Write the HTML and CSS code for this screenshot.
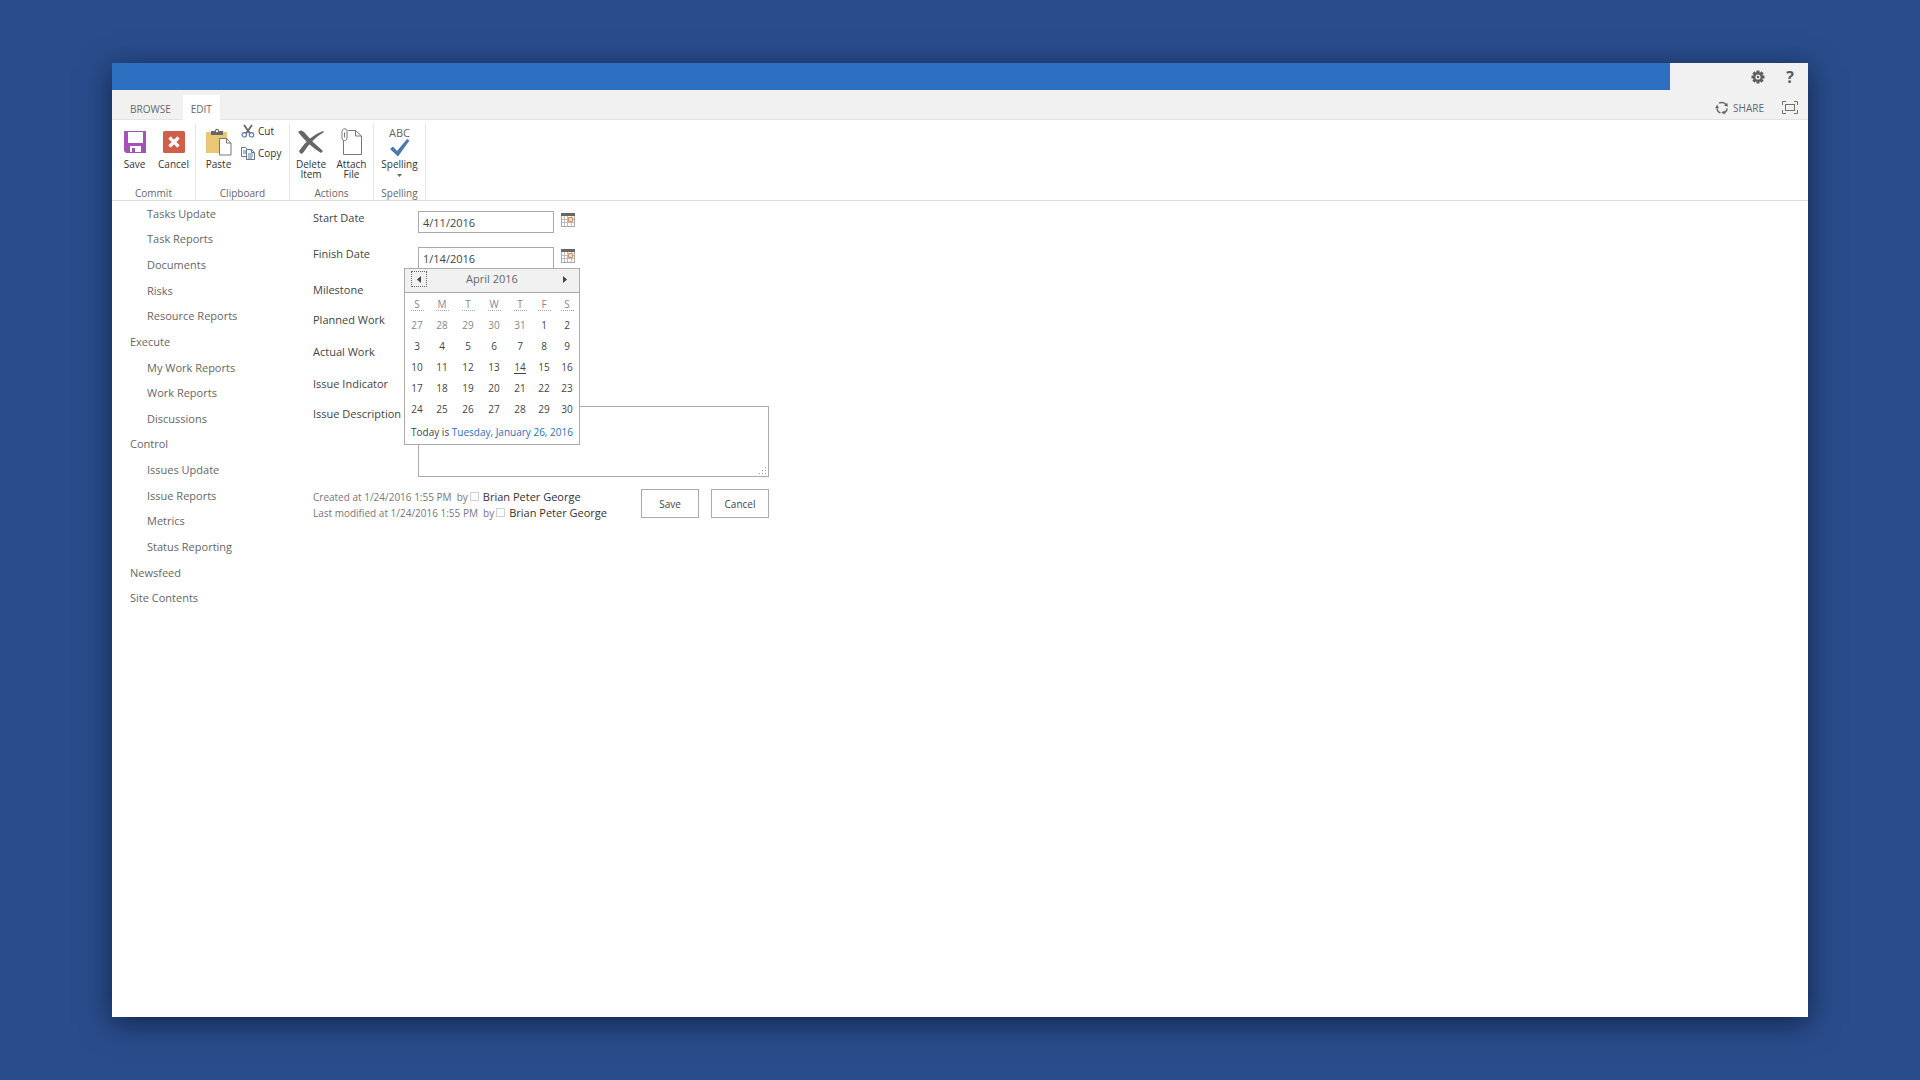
FILE: index.html
```html
<!DOCTYPE html>
<html lang="en">
<head>
<meta charset="utf-8">
<title>Edit Item</title>
<link rel="stylesheet" href="styles.css">
</head>
<body>
<div class="window">
  <header class="header">
    <div class="suite-bar">
      <div class="suite-brand"></div>
      <div class="suite-actions">
        <button class="icon-button" aria-label="Settings">
          <svg width="14" height="14" viewBox="0 0 14 14"><g fill="#5c5c5c"><rect x="5.5" y="0.5" width="3" height="13"/><rect x="5.5" y="0.5" width="3" height="13" transform="rotate(45 7 7)"/><rect x="5.5" y="0.5" width="3" height="13" transform="rotate(90 7 7)"/><rect x="5.5" y="0.5" width="3" height="13" transform="rotate(135 7 7)"/></g><circle cx="7" cy="7" r="3.7" fill="#f1f1f1" stroke="#5c5c5c" stroke-width="2.2"/><circle cx="7" cy="7" r="1.2" fill="#5c5c5c"/></svg>
        </button>
        <button class="icon-button help">?</button>
      </div>
    </div>
    <div class="tab-bar">
      <nav class="tabs">
        <a class="tab" href="#browse">BROWSE</a>
        <a class="tab tab-active" href="#edit">EDIT</a>
      </nav>
      <div class="page-actions">
        <button class="share">
          <svg width="14" height="14" viewBox="0 0 14 14" fill="none" stroke="#666" stroke-width="1.4"><path d="M4 2.2A5.2 5.2 0 0 1 11.3 4.2"/><path d="M12.2 7.4A5.2 5.2 0 0 1 8.4 12"/><path d="M5.4 12A5.2 5.2 0 0 1 2 7.5"/><path d="M0 7.2L2.2 3.4 4 7.2ZM9 4.8L13 5.5 12.2 1.8ZM9.6 9.4L6.2 11.6 9.6 13.6Z" fill="#666" stroke="none"/></svg>
          <span>SHARE</span>
        </button>
        <button class="icon-button" aria-label="Focus on content">
          <svg width="16" height="13" viewBox="0 0 16 13" fill="none" stroke="#707070"><rect x="3.5" y="3.5" width="9" height="6"/><path d="M.5 4V.5H4M12 .5h3.500V4M15.500 9v3.500H12M4 12.500H.5V9"/></svg>
        </button>
      </div>
    </div>
  </header>

  <div class="ribbon">
    <section class="group">
      <div class="group-tools group-inset">
        <button class="tool">
          <span class="tool-icon"><svg width="22" height="22" viewBox="0 0 22 22"><path d="M0 0h22v22H2l-2-2z" fill="#a352b8"/><path d="M4 1h15v11H4z" fill="#fff"/><path d="M6 15h11v6H6z" fill="#fff"/><path d="M8 17h3v4H8z" fill="#a352b8"/></svg></span>
          <span class="tool-label">Save</span>
        </button>
        <button class="tool">
          <span class="tool-icon"><svg width="22" height="22" viewBox="0 0 22 22"><rect width="22" height="22" rx="1.500" fill="#cf5f48"/><path d="M6.500 6.500l9 9M15.500 6.500l-9 9" stroke="#fff" stroke-width="3.200"/></svg></span>
          <span class="tool-label">Cancel</span>
        </button>
      </div>
      <h2 class="group-title">Commit</h2>
    </section>
    <section class="group">
      <div class="group-tools">
        <button class="tool tool-paste">
          <span class="tool-icon"><svg width="26" height="28" viewBox="0 0 26 28"><path d="M0 4h21v21H0z" fill="#eac776"/><path d="M5 7V3h4c0-3 4-3 4 0h4v4z" fill="#666"/><circle cx="11" cy="3.200" r="1.100" fill="#fff"/><path d="M13.500 10.500h7l4.500 4.500v12H13.500z" fill="#fff" stroke="#777"/><path d="M20.500 10.500V15H25" fill="none" stroke="#777"/></svg></span>
          <span class="tool-label">Paste</span>
        </button>
        <div class="tool-stack">
          <button class="tool-small">
            <svg width="14" height="14" viewBox="0 0 14 14" fill="none"><path d="M3 1l6 8.500M11 1L5 9.500" stroke="#666" stroke-width="1.800"/><circle cx="3.300" cy="10.800" r="2.200" stroke="#5a78b8" stroke-width="1.200"/><circle cx="10.500" cy="10.800" r="2.200" stroke="#5a78b8" stroke-width="1.200"/></svg>
            <span>Cut</span>
          </button>
          <button class="tool-small">
            <svg width="14" height="14" viewBox="0 0 14 14" stroke="#627a9c"><path d="M.5 1.500h4l2 2v7h-6z" fill="#fff"/><path d="M2 5h3M2 7h3" /><path d="M5.500 3.500h5l3 3v7h-8z" fill="#fff"/><path d="M10.500 3.500v3h3M7 8h5M7 10h5M7 12h4" fill="none"/></svg>
            <span>Copy</span>
          </button>
        </div>
      </div>
      <h2 class="group-title">Clipboard</h2>
    </section>
    <section class="group">
      <div class="group-tools">
        <button class="tool tool-wide">
          <span class="tool-icon"><svg width="26" height="24" viewBox="0 0 26 24" fill="#666"><path d="M0 2Q3-1 6 2 14 12 25 21L23 23Q10 15 0 2Z"/><path d="M26 2Q14 9 5 23 2 25 1 21 11 6 25 1Z"/></svg></span>
          <span class="tool-label">Delete<br>Item</span>
        </button>
        <button class="tool">
          <span class="tool-icon"><svg width="22" height="28" viewBox="0 0 22 28" fill="none" stroke="#777"><path d="M2.500 12v14.500h18V8L14.500 2.500H7"/><path d="M14.500 2.500V8h6"/><path d="M1 3.500v6.500c0 3.500 5 3.500 5 0V3c0-3-5-3-5 .5M3.500 4.500v5"/></svg></span>
          <span class="tool-label">Attach<br>File</span>
        </button>
      </div>
      <h2 class="group-title">Actions</h2>
    </section>
    <section class="group">
      <div class="group-tools">
        <button class="tool tool-spelling">
          <span class="tool-icon spelling-icon"><span class="abc">ABC</span><svg width="20" height="18" viewBox="0 0 20 18"><path d="M0 10l3-2.500 4 4.500L17 0l2.500 1.500L8 17.500z" fill="#4a78b0"/></svg></span>
          <span class="tool-label">Spelling</span>
          <svg class="caret" width="5" height="3" viewBox="0 0 5 3"><path d="M0 0h5L2.500 3z" fill="#666"/></svg>
        </button>
      </div>
      <h2 class="group-title">Spelling</h2>
    </section>
  </div>

  <div class="content">
    <nav class="side-nav">
      <ul class="nav-list">
        <li class="nav-child"><a href="#tasks-update">Tasks Update</a></li>
        <li class="nav-child"><a href="#task-reports">Task Reports</a></li>
        <li class="nav-child"><a href="#documents">Documents</a></li>
        <li class="nav-child"><a href="#risks">Risks</a></li>
        <li class="nav-child"><a href="#resource-reports">Resource Reports</a></li>
        <li><a href="#execute">Execute</a></li>
        <li class="nav-child"><a href="#my-work-reports">My Work Reports</a></li>
        <li class="nav-child"><a href="#work-reports">Work Reports</a></li>
        <li class="nav-child"><a href="#discussions">Discussions</a></li>
        <li><a href="#control">Control</a></li>
        <li class="nav-child"><a href="#issues-update">Issues Update</a></li>
        <li class="nav-child"><a href="#issue-reports">Issue Reports</a></li>
        <li class="nav-child"><a href="#metrics">Metrics</a></li>
        <li class="nav-child"><a href="#status-reporting">Status Reporting</a></li>
        <li><a href="#newsfeed">Newsfeed</a></li>
        <li><a href="#site-contents">Site Contents</a></li>
      </ul>
    </nav>

    <form class="form">
      <div class="fields">
        <label class="field-name" for="start-date">Start Date</label>
        <div class="date-field">
          <input class="text-input" id="start-date" type="text" value="4/11/2016">
          <button class="icon-button" type="button" aria-label="Pick start date">
            <svg width="14" height="14" viewBox="0 0 14 14"><rect x=".5" y=".5" width="13" height="13" fill="#fff" stroke="#aaa"/><path d="M3.500 3v10M6.500 3v10M10.500 3v10M1 6.500h12M1 9.500h12" stroke="#bbb"/><path d="M7.500 4.500h4v4h-4z" fill="#f5d9c8" stroke="#d98e63"/><path d="M0 0h14v3H0z" fill="#666"/></svg>
          </button>
        </div>
        <label class="field-name" for="finish-date">Finish Date</label>
        <div class="date-field">
          <input class="text-input" id="finish-date" type="text" value="1/14/2016">
          <button class="icon-button" type="button" aria-label="Pick finish date">
            <svg width="14" height="14" viewBox="0 0 14 14"><rect x=".5" y=".5" width="13" height="13" fill="#fff" stroke="#aaa"/><path d="M3.500 3v10M6.500 3v10M10.500 3v10M1 6.500h12M1 9.500h12" stroke="#bbb"/><path d="M7.500 4.500h4v4h-4z" fill="#f5d9c8" stroke="#d98e63"/><path d="M0 0h14v3H0z" fill="#666"/></svg>
          </button>
          <div class="calendar">
            <div class="calendar-head">
              <button class="month-button month-focus" type="button" aria-label="Previous month"><svg width="4" height="7" viewBox="0 0 4 7"><path d="M4 0v7L0 3.500z" fill="#444"/></svg></button>
              <span>April 2016</span>
              <button class="month-button" type="button" aria-label="Next month"><svg width="4" height="7" viewBox="0 0 4 7"><path d="M0 0v7l4-3.500z" fill="#444"/></svg></button>
            </div>
            <table class="days">
              <colgroup><col class="col-s"><col class="col-m"><col class="col-m"><col class="col-m"><col class="col-m"><col class="col-f"><col class="col-s"></colgroup>
              <thead><tr><th><abbr>S</abbr></th><th><abbr>M</abbr></th><th><abbr>T</abbr></th><th><abbr>W</abbr></th><th><abbr>T</abbr></th><th><abbr>F</abbr></th><th><abbr>S</abbr></th></tr></thead>
              <tbody>
                <tr><td class="other">27</td><td class="other">28</td><td class="other">29</td><td class="other">30</td><td class="other">31</td><td>1</td><td>2</td></tr>
                <tr><td>3</td><td>4</td><td>5</td><td>6</td><td>7</td><td>8</td><td>9</td></tr>
                <tr><td>10</td><td>11</td><td>12</td><td>13</td><td class="selected"><span>14</span></td><td>15</td><td>16</td></tr>
                <tr><td>17</td><td>18</td><td>19</td><td>20</td><td>21</td><td>22</td><td>23</td></tr>
                <tr><td>24</td><td>25</td><td>26</td><td>27</td><td>28</td><td>29</td><td>30</td></tr>
              </tbody>
            </table>
            <p class="today">Today is <a href="#today">Tuesday, January 26, 2016</a></p>
          </div>
        </div>
        <span class="field-name">Milestone</span>
        <span class="field-name">Planned Work</span>
        <span class="field-name">Actual Work</span>
        <span class="field-name">Issue Indicator</span>
        <label class="field-name" for="issue-description">Issue Description</label>
        <div class="area-wrap">
          <textarea class="text-area" id="issue-description"></textarea>
          <svg class="grip" width="8" height="8" viewBox="0 0 8 8" fill="#999"><path d="M6 0h1v1H6zM3 3h1v1H3zM6 3h1v1H6zM0 6h1v1H0zM3 6h1v1H3zM6 6h1v1H6z"/></svg>
        </div>
      </div>
      <div class="form-foot">
        <div class="meta">
          <p>Created at 1/24/2016 1:55 PM&nbsp; by<span class="presence"></span><a href="#author">Brian Peter George</a></p>
          <p>Last modified at 1/24/2016 1:55 PM&nbsp; by<span class="presence"></span><a href="#editor">Brian Peter George</a></p>
        </div>
        <div class="form-buttons">
          <button class="form-button" type="button">Save</button>
          <button class="form-button" type="button">Cancel</button>
        </div>
      </div>
    </form>
  </div>
</div>
</body>
</html>
```
FILE: styles.css
```css
* {
  box-sizing: border-box;
}

body {
  display: flex;
  min-height: 100vh;
  margin: 0;
  padding: 63px 112px;
  background: #294d8c;
  color: #444;
  font: 11px/16px "Open Sans", "Noto Sans", sans-serif;
}

button {
  padding: 0;
  border: 0;
  background: none;
  color: inherit;
  font: inherit;
}

a {
  color: inherit;
  text-decoration: none;
}

p,
h2 {
  margin: 0;
}

svg {
  display: block;
  flex: none;
}

.window {
  flex: 1;
  background: #fff;
  box-shadow: 0 6px 28px rgba(0, 10, 30, 0.6);
}

/* Header */

.header {
  background: #f1f1f1;
}

.suite-bar {
  display: flex;
  height: 27px;
}

.suite-brand {
  flex: 1;
  background: #2d6fc1;
}

.suite-actions {
  display: flex;
  align-items: center;
  justify-content: flex-end;
  gap: 16px;
  width: 138px;
  padding-right: 10px;
}

.icon-button {
  display: flex;
  align-items: center;
  justify-content: center;
  width: 16px;
}

.help {
  color: #5c5c5c;
  font-size: 16px;
  font-weight: 700;
}

.tab-bar {
  display: flex;
  justify-content: space-between;
  height: 30px;
  padding: 5px 10px 0 0;
  border-bottom: 1px solid #e3e3e3;
}

.tabs {
  display: flex;
  margin-bottom: -1px;
}

.tab {
  padding: 6px 12px 0 18px;
  color: #666;
  font-size: 10px;
}

.tab-active {
  padding: 6px 8px 0;
  background: #fff;
}

.page-actions,
.share {
  display: flex;
  align-items: center;
}

.page-actions {
  gap: 18px;
}

.share {
  gap: 4px;
  padding-top: 2px;
  color: #666;
  font-size: 10px;
}

/* Ribbon */

.ribbon {
  display: grid;
  grid-template-columns: 84px 94px 84px 52px;
  padding-top: 3px;
  border-bottom: 1px solid #ddd;
  color: #333;
  font-size: 10px;
}

.group {
  display: flex;
  flex-direction: column;
  justify-content: space-between;
  min-height: 77px;
  border-right: 1px solid #e6e6e6;
}

.group-tools {
  display: flex;
  align-items: flex-start;
}

.group-inset {
  padding-left: 3px;
}

.group-title {
  color: #666;
  font-size: 10px;
  font-weight: 400;
  line-height: 14px;
  text-align: center;
}

.tool {
  display: flex;
  flex-direction: column;
  align-items: center;
  width: 39px;
  padding-top: 4px;
  line-height: 10px;
}

.tool-icon {
  display: flex;
  align-items: center;
  height: 30px;
  margin-bottom: 2px;
}

.tool-wide {
  width: 42px;
}

.tool-paste {
  width: 45px;
}

.tool-spelling {
  width: 51px;
}

.spelling-icon {
  flex-direction: column;
  justify-content: flex-end;
}

.abc {
  color: #666;
  font-size: 11px;
  line-height: 12px;
}

.caret {
  margin-top: 5px;
}

.tool-stack {
  display: flex;
  flex-direction: column;
  gap: 6px;
}

.tool-small {
  display: flex;
  align-items: center;
  gap: 3px;
}

/* Page body */

.content {
  display: flex;
  align-items: flex-start;
}

.side-nav {
  width: 201px;
  padding-left: 18px;
  color: #666;
}

.nav-list {
  display: grid;
  grid-auto-rows: 1fr;
  align-items: center;
  min-height: 410px;
  margin: 0;
  padding: 0;
  list-style: none;
}

.nav-child {
  padding-left: 17px;
}

.form {
  width: 456px;
  padding-top: 9px;
}

.fields {
  display: grid;
  grid-template-columns: 105px 1fr;
  grid-template-rows: 36px 36px 30px 32px 32px 30px auto;
}

.field-name {
  grid-column: 1;
}

.date-field {
  position: relative;
  display: flex;
  align-items: flex-start;
  gap: 6px;
}

.date-field .icon-button {
  padding-top: 3px;
}

.text-input {
  width: 136px;
  height: 22px;
  margin-top: 1px;
  padding: 0 4px;
  border: 1px solid #ababab;
  color: #444;
  font: inherit;
}

.area-wrap {
  position: relative;
}

.text-area {
  display: block;
  width: 100%;
  height: 71px;
  border: 1px solid #ababab;
  font: inherit;
  resize: none;
}

.grip {
  position: absolute;
  right: 2px;
  bottom: 2px;
}

.form-foot {
  display: flex;
  justify-content: space-between;
  padding-top: 12px;
}

.meta {
  color: #777;
  font-size: 10px;
}

.meta a {
  color: #333;
  font-size: 11px;
}

.presence {
  display: inline-block;
  width: 9px;
  height: 9px;
  margin: 0 4px 0 2px;
  border: 1px solid #d0d0d0;
}

.form-buttons {
  display: flex;
  gap: 12px;
}

.form-button {
  width: 58px;
  height: 29px;
  border: 1px solid #ababab;
  background: #fff;
  font-size: 10px;
}

/* Date picker */

.calendar {
  position: absolute;
  z-index: 1;
  top: 22px;
  left: -14px;
  width: 176px;
  border: 1px solid #ababab;
  background: #fff;
}

.calendar-head {
  display: flex;
  align-items: flex-start;
  justify-content: space-between;
  height: 24px;
  padding: 2px 6px;
  border-bottom: 1px solid #ababab;
  background: #f1f1f1;
  color: #666;
}

.month-button {
  display: flex;
  align-items: center;
  justify-content: center;
  width: 16px;
  height: 16px;
}

.month-focus {
  border: 1px dotted #666;
}

.days {
  width: 100%;
  border-collapse: collapse;
  table-layout: fixed;
  font-size: 10px;
  text-align: center;
}

.col-s {
  width: 24px;
}

.col-m {
  width: 26px;
}

.col-f {
  width: 22px;
}

.days th,
.days td {
  height: 21px;
  padding: 0;
  line-height: 14px;
}

.days th {
  color: #888;
  font-weight: 400;
}

.days abbr {
  display: inline-block;
  min-width: 13px;
  border-bottom: 1px dotted #aaa;
  line-height: 12px;
}

.days .other {
  color: #888;
}

.selected span {
  display: inline-block;
  border-bottom: 1px solid #444;
  line-height: 12px;
}

.today {
  padding: 5px 0 4px;
  font-size: 10px;
  text-align: center;
  white-space: nowrap;
}

.today a {
  color: #2d6fb5;
}
```
